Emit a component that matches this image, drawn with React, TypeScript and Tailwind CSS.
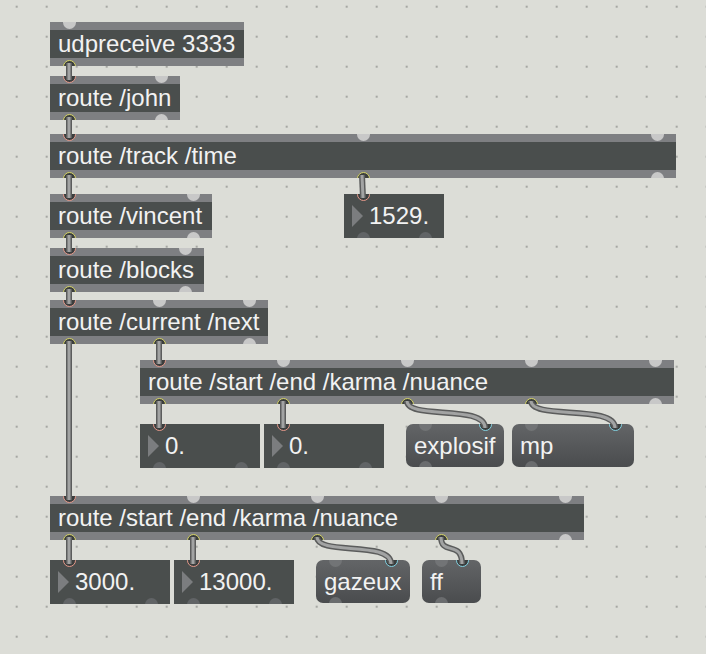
import React from "react";

type Port = "c" | "u";

const FONT = { fontFamily: '"Liberation Sans", Arial, sans-serif' };
const textCls = "text-[24px] leading-none whitespace-nowrap text-[#f2f2f2]";

// one inlet / outlet: a ring when a cord is attached, a grey cap otherwise
function Dot({ kind, ring, fill }: { kind: Port; ring: string; fill: string }) {
  if (kind === "c") {
    return <div className={`h-[13px] w-[13px] shrink-0 rounded-full border-[1.5px] bg-[#3b3e3e] ${ring}`} />;
  }
  return <div className={`h-[13px] w-[13px] shrink-0 rounded-full ${fill}`} />;
}

function Ports({
  edge,
  ports,
  ring,
  fill,
}: {
  edge: "top" | "bottom";
  ports: Port[];
  ring: string;
  fill: string;
}) {
  return (
    <div
      className={`absolute inset-x-0 flex justify-between px-[12.5px] ${
        edge === "top" ? "top-[-6.5px]" : "bottom-[-6.5px]"
      }`}
    >
      {ports.map((k, i) => (
        <Dot key={i} kind={k} ring={ring} fill={fill} />
      ))}
    </div>
  );
}

function Obj({ pos, text, ins, outs }: { pos: string; text: string; ins: Port[]; outs: Port[] }) {
  return (
    <div className={`absolute flex h-[44px] flex-col overflow-hidden bg-[#7e7f82] py-[8px] ${pos}`}>
      <div className={`flex h-[28px] items-center bg-[#4a4e4d] pl-[8px] ${textCls}`} style={FONT}>
        {text}
      </div>
      <Ports edge="top" ports={ins} ring="border-[#e69a8b]" fill="bg-[#c8c8c8]" />
      <Ports edge="bottom" ports={outs} ring="border-[#d6d466]" fill="bg-[#c8c8c8]" />
    </div>
  );
}

function Num({ pos, value }: { pos: string; value: string }) {
  return (
    <div className={`absolute flex h-[44px] items-center gap-[6px] overflow-hidden bg-[#4a4e4d] pl-[8px] ${pos}`}>
      <div className="h-0 w-0 border-y-[11px] border-l-[11px] border-y-transparent border-l-[#7b7d7f]" />
      <span className={textCls} style={FONT}>
        {value}
      </span>
      <Ports edge="top" ports={["c"]} ring="border-[#e69a8b]" fill="bg-[#c8c8c8]" />
      <Ports edge="bottom" ports={["u", "u"]} ring="" fill="bg-[#616466]" />
    </div>
  );
}

function Msg({ pos, text }: { pos: string; text: string }) {
  return (
    <div
      className={`absolute flex h-[43px] items-center overflow-hidden rounded-[7px] bg-linear-to-b from-[#636567] to-[#4a4c4e] pl-[8px] ${pos}`}
    >
      <span className={textCls} style={FONT}>
        {text}
      </span>
      <div className="absolute inset-x-0 top-[-6.5px] flex justify-between px-[12.5px]">
        <Dot kind="u" ring="" fill="bg-[#727476]" />
        <Dot kind="c" ring="border-[#84d3e3]" fill="" />
      </div>
      <Ports edge="bottom" ports={["u"]} ring="" fill="bg-[#6a6c6e]" />
    </div>
  );
}

const straight: [number, number, number, number][] = [
  [69, 66, 69, 76],
  [69, 120, 69, 134],
  [69, 178, 69, 194],
  [362, 178, 363, 194],
  [69, 238, 69, 248],
  [69, 292, 69, 300],
  [69, 344, 69, 496],
  [159, 344, 159, 360],
  [159, 404, 159, 424],
  [283, 404, 283, 424],
  [69, 540, 69, 560],
  [193, 540, 193, 560],
];

const curved: [number, number, number, number][] = [
  [407, 404, 485, 424],
  [531, 404, 615, 424],
  [317, 540, 391, 560],
  [441, 540, 462, 560],
];

function Cords() {
  const paths = [
    ...straight.map(([a, b, c, d]) => `M${a},${b - 3} L${c},${d + 4}`),
    ...curved.map(([a, b, c, d]) => `M${a},${b - 3} C${a},${b + 16} ${c},${d - 20} ${c},${d + 4}`),
  ];
  return (
    <svg className="pointer-events-none absolute inset-0" width={706} height={654}>
      {paths.map((p, i) => (
        <g key={i} fill="none">
          <path d={p} stroke="#5b5c5c" strokeWidth={6} />
          <path d={p} stroke="#a2a3a3" strokeWidth={3} />
        </g>
      ))}
    </svg>
  );
}

export default function App() {
  return (
    <div className="relative h-[654px] w-[706px] overflow-hidden bg-[#dcddd7] bg-[radial-gradient(circle,#a6a7a3_1px,transparent_1.6px)] bg-[length:30px_30px] bg-[position:1.7px_-8.3px]">
      <Obj pos="left-[50px] top-[22px] w-[194px]" text="udpreceive 3333" ins={["u"]} outs={["c"]} />
      <Obj pos="left-[50px] top-[76px] w-[130px]" text="route /john" ins={["c", "u"]} outs={["c", "u"]} />
      <Obj
        pos="left-[50px] top-[134px] w-[626px]"
        text="route /track /time"
        ins={["c", "u", "u"]}
        outs={["c", "c", "u"]}
      />
      <Obj pos="left-[50px] top-[194px] w-[162px]" text="route /vincent" ins={["c", "u"]} outs={["c", "u"]} />
      <Num pos="left-[344px] top-[194px] w-[100px]" value="1529." />
      <Obj pos="left-[50px] top-[248px] w-[154px]" text="route /blocks" ins={["c", "u"]} outs={["c", "u"]} />
      <Obj
        pos="left-[50px] top-[300px] w-[218px]"
        text="route /current /next"
        ins={["c", "u", "u"]}
        outs={["c", "c", "u"]}
      />
      <Obj
        pos="left-[140px] top-[360px] w-[534px]"
        text="route /start /end /karma /nuance"
        ins={["c", "u", "u", "u", "u"]}
        outs={["c", "c", "c", "c", "u"]}
      />
      <Num pos="left-[140px] top-[424px] w-[120px]" value="0." />
      <Num pos="left-[264px] top-[424px] w-[120px]" value="0." />
      <Msg pos="left-[406px] top-[424px] w-[98px]" text="explosif" />
      <Msg pos="left-[512px] top-[424px] w-[122px]" text="mp" />
      <Obj
        pos="left-[50px] top-[496px] w-[534px]"
        text="route /start /end /karma /nuance"
        ins={["c", "u", "u", "u", "u"]}
        outs={["c", "c", "c", "c", "u"]}
      />
      <Num pos="left-[50px] top-[560px] w-[120px]" value="3000." />
      <Num pos="left-[174px] top-[560px] w-[120px]" value="13000." />
      <Msg pos="left-[316px] top-[560px] w-[94px]" text="gazeux" />
      <Msg pos="left-[422px] top-[560px] w-[59px]" text="ff" />
      <Cords />
    </div>
  );
}
